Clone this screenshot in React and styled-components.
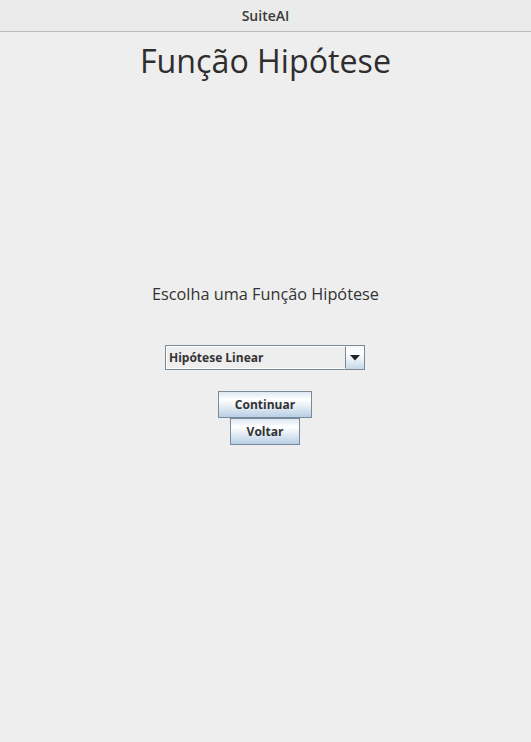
import React from "react";
import styled, { createGlobalStyle } from "styled-components";

const Global = createGlobalStyle`
  html, body { margin: 0; padding: 0; background: #eeeeee; }
  body { font-family: "Open Sans", "Noto Sans", sans-serif; }
`;

const Window = styled.div`
  width: 531px;
  height: 742px;
  background: #eeeeee;
  display: flex;
  flex-direction: column;
  overflow: hidden;
`;

const TitleBar = styled.div`
  height: 31px;
  border-bottom: 1px solid #bcbcbc;
  background: #ebebeb;
  display: flex;
  align-items: center;
  justify-content: center;
  font-family: "Open Sans", sans-serif;
  font-weight: 600;
  font-size: 14px;
  color: #3a3a3a;
`;

const Content = styled.div`
  display: flex;
  flex-direction: column;
  align-items: center;
`;

const Heading = styled.h1`
  margin: 8px 0 0;
  font-family: "Open Sans", sans-serif;
  font-weight: 400;
  font-size: 32.2px;
  line-height: 42px;
  color: #2e2e2e;
`;

const Prompt = styled.div`
  margin-top: 201px;
  font-family: "Open Sans", sans-serif;
  font-size: 16.3px;
  line-height: 22px;
  color: #333333;
`;

const Combo = styled.div`
  margin: 40px 1px 0 0;
  width: 200px;
  height: 25px;
  box-sizing: border-box;
  border: 1px solid #7a8a99;
  display: flex;
  background: #eeeeee;
`;

const ComboField = styled.div`
  flex: 1;
  box-sizing: border-box;
  border: 1px solid #ffffff;
  border-right: 1px solid #7a8a99;
  display: flex;
  align-items: center;
  padding-left: 2px;
  font-family: "Open Sans", sans-serif;
  font-weight: 700;
  font-size: 12px;
  color: #333333;
`;

const ComboButton = styled.div`
  width: 18px;
  display: flex;
  align-items: center;
  justify-content: center;
  background: linear-gradient(#f5f8fb, #ffffff 35%, #c6d8ea);
`;

const Buttons = styled.div`
  margin: 21px 1px 0 0;
  display: flex;
  flex-direction: column;
  align-items: center;
`;

const Button = styled.button`
  height: ${(p) => p.$h}px;
  width: ${(p) => p.$w}px;
  box-sizing: border-box;
  border: 1px solid #7a8a99;
  padding: 0;
  background: linear-gradient(#dde8f3 0%, #ffffff 30%, #eef3f8 50%, #b8cfe5 100%);
  font-family: "Open Sans", sans-serif;
  font-weight: 700;
  font-size: 12px;
  color: #333333;
  display: flex;
  align-items: center;
  justify-content: center;
`;

export default function App() {
  return (
    <Window>
      <Global />
      <TitleBar>SuiteAI</TitleBar>
      <Content>
        <Heading>Função Hipótese</Heading>
        <Prompt>Escolha uma Função Hipótese</Prompt>
        <Combo>
          <ComboField>Hipótese Linear</ComboField>
          <ComboButton>
            <svg width="10" height="6" viewBox="0 0 10 6">
              <path d="M0 0 H10 L5 5.5 Z" fill="#222" />
            </svg>
          </ComboButton>
        </Combo>
        <Buttons>
          <Button $w={94} $h={27}>Continuar</Button>
          <Button $w={70} $h={27}>Voltar</Button>
        </Buttons>
      </Content>
    </Window>
  );
}
